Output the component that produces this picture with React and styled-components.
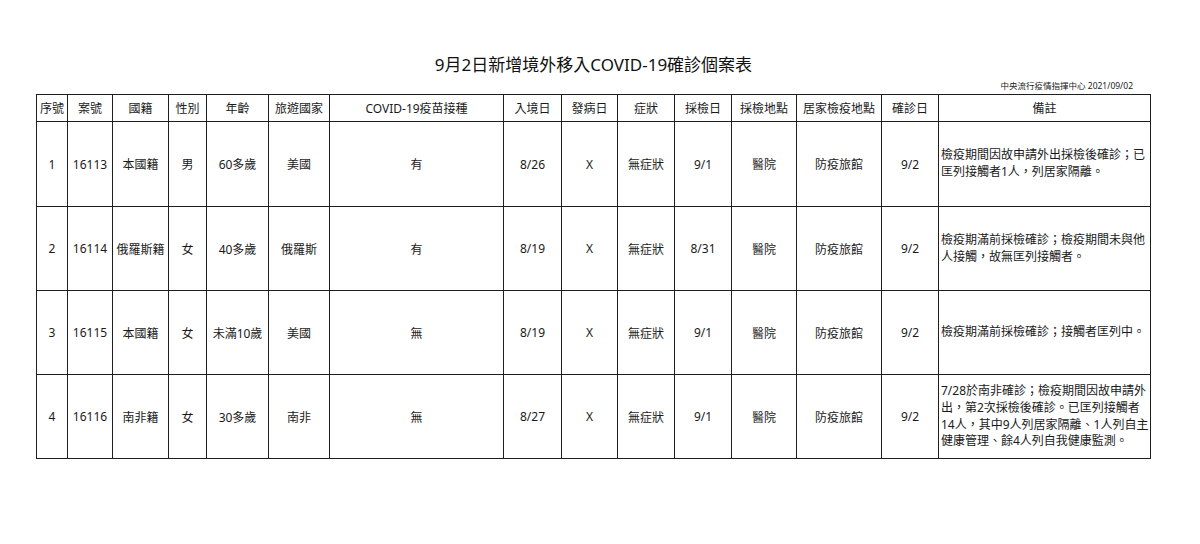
import React from "react";
import styled, { createGlobalStyle } from "styled-components";

const GlobalStyle = createGlobalStyle`
  html, body {
    margin: 0;
    padding: 0;
    background: #ffffff;
  }
  body {
    font-family: "Noto Sans", "Noto Sans CJK TC", sans-serif;
    color: #1a1a1a;
  }
`;

const Page = styled.div`
  width: 1200px;
  height: 544px;
  box-sizing: border-box;
  padding: 53px 0 0 36px;
  background: #fff;
`;

const Sheet = styled.div`
  width: 1115px;
  display: flex;
  flex-direction: column;
`;

const Title = styled.h1`
  margin: 0;
  font-size: 17px;
  font-weight: 400;
  line-height: 24px;
  text-align: center;
  color: #111;
`;

const Source = styled.div`
  margin: 3px 0 2px;
  padding-right: 18px;
  font-size: 8.5px;
  line-height: 12px;
  text-align: right;
  color: #222;
`;

const Table = styled.table`
  width: 1115px;
  border-collapse: collapse;
  table-layout: fixed;
  font-size: 12px;
  color: #1a1a1a;
`;

const HeadCell = styled.th`
  height: 26px;
  padding: 0;
  border: 1px solid #1e1e1e;
  font-weight: 400;
  text-align: center;
  vertical-align: middle;
  white-space: nowrap;
`;

const Cell = styled.td`
  height: ${(p) => p.$h}px;
  padding: 0;
  border: 1px solid #1e1e1e;
  text-align: center;
  vertical-align: middle;
  white-space: nowrap;
`;

const NoteCell = styled.td`
  padding: 0 0 0 2px;
  border: 1px solid #1e1e1e;
  text-align: left;
  vertical-align: middle;
  line-height: 16.6px;
  line-break: strict;
`;

const widths = [31, 45, 56, 38, 62, 61, 174, 58, 56, 57, 57, 65, 85, 57, 212];

const headers = [
  "序號",
  "案號",
  "國籍",
  "性別",
  "年齡",
  "旅遊國家",
  "COVID-19疫苗接種",
  "入境日",
  "發病日",
  "症狀",
  "採檢日",
  "採檢地點",
  "居家檢疫地點",
  "確診日",
  "備註",
];

const rows = [
  {
    h: 84,
    cells: ["1", "16113", "本國籍", "男", "60多歲", "美國", "有", "8/26", "X", "無症狀", "9/1", "醫院", "防疫旅館", "9/2"],
    note: "檢疫期間因故申請外出採檢後確診；已匡列接觸者1人，列居家隔離。",
  },
  {
    h: 83,
    cells: ["2", "16114", "俄羅斯籍", "女", "40多歲", "俄羅斯", "有", "8/19", "X", "無症狀", "8/31", "醫院", "防疫旅館", "9/2"],
    note: "檢疫期滿前採檢確診；檢疫期間未與他人接觸，故無匡列接觸者。",
  },
  {
    h: 83,
    cells: ["3", "16115", "本國籍", "女", "未滿10歲", "美國", "無", "8/19", "X", "無症狀", "9/1", "醫院", "防疫旅館", "9/2"],
    note: "檢疫期滿前採檢確診；接觸者匡列中。",
  },
  {
    h: 83,
    cells: ["4", "16116", "南非籍", "女", "30多歲", "南非", "無", "8/27", "X", "無症狀", "9/1", "醫院", "防疫旅館", "9/2"],
    note: "7/28於南非確診；檢疫期間因故申請外出，第2次採檢後確診。已匡列接觸者14人，其中9人列居家隔離、1人列自主健康管理、餘4人列自我健康監測。",
  },
];

export default function App() {
  return (
    <>
      <GlobalStyle />
      <Page>
        <Sheet>
          <Title>9月2日新增境外移入COVID-19確診個案表</Title>
          <Source>中央流行疫情指揮中心 2021/09/02</Source>
          <Table>
            <colgroup>
              {widths.map((w, i) => (
                <col key={i} style={{ width: w }} />
              ))}
            </colgroup>
            <thead>
              <tr>
                {headers.map((h) => (
                  <HeadCell key={h}>{h}</HeadCell>
                ))}
              </tr>
            </thead>
            <tbody>
              {rows.map((r) => (
                <tr key={r.cells[1]}>
                  {r.cells.map((c, i) => (
                    <Cell key={i} $h={r.h}>
                      {c}
                    </Cell>
                  ))}
                  <NoteCell>{r.note}</NoteCell>
                </tr>
              ))}
            </tbody>
          </Table>
        </Sheet>
      </Page>
    </>
  );
}
